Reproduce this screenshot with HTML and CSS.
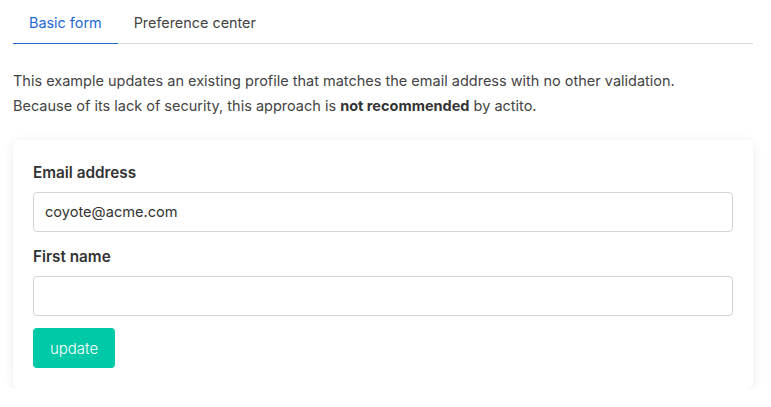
FILE: index.html
```html
<!DOCTYPE html>
<html>
<head>
<meta charset="utf-8">
<link rel="stylesheet" href="styles.css">
</head>
<body>
<div class="page">
  <nav class="tabs">
    <a class="tab active">Basic form</a>
    <a class="tab">Preference center</a>
  </nav>
  <p class="intro">This example updates an existing profile that matches the email address with no other validation.<br>Because of its lack of security, this approach is <strong>not recommended</strong> by actito.</p>
  <form class="card">
    <label class="label">Email address</label>
    <input class="input" type="text" value="coyote@acme.com">
    <label class="label">First name</label>
    <input class="input" type="text" value="">
    <div><button class="btn" type="button">update</button></div>
  </form>
</div>
</body>
</html>
```
FILE: styles.css
```css
html, body { margin: 0; padding: 0; background: #fff; }
body { font-family: Inter, "Noto Sans", sans-serif; color: #444; font-size: 15px; }
.page { padding: 0 18px 0 13px; }
.tabs { display: flex; border-bottom: 1px solid #d6d6d6; height: 43px; align-items: stretch; }
.tab { display: flex; align-items: center; padding: 2px 16px 0; font-size: 14.4px; color: #444; margin-bottom: -1px; border-bottom: 1px solid transparent; cursor: pointer; }
.tab.active { color: #2369d3; border-bottom-color: #2369d3; }
.intro { margin: 24px 0 22px; line-height: 25px; color: #444; font-size: 14.5px; }
.intro strong { font-weight: 700; color: #333; }
.card { background: #fff; border-radius: 6px; box-shadow: 0 2px 12px rgba(0,0,0,0.08); padding: 22px 20px 20px; display: flex; flex-direction: column; }
.label { font-weight: 600; color: #333; font-size: 15.3px; line-height: 22px; margin: 0 0 8px; }
.input { box-sizing: border-box; height: 40px; border: 1px solid #d4d4d4; border-radius: 4px; padding: 0 11px; font-family: inherit; font-size: 14.6px; color: #333; margin-bottom: 14px; outline: none; }
.btn { height: 40px; width: 82px; border: none; border-radius: 4px; background: #00c9a7; color: #fff; font-family: inherit; font-size: 15px; font-weight: 300; margin-top: -2px; }
```
